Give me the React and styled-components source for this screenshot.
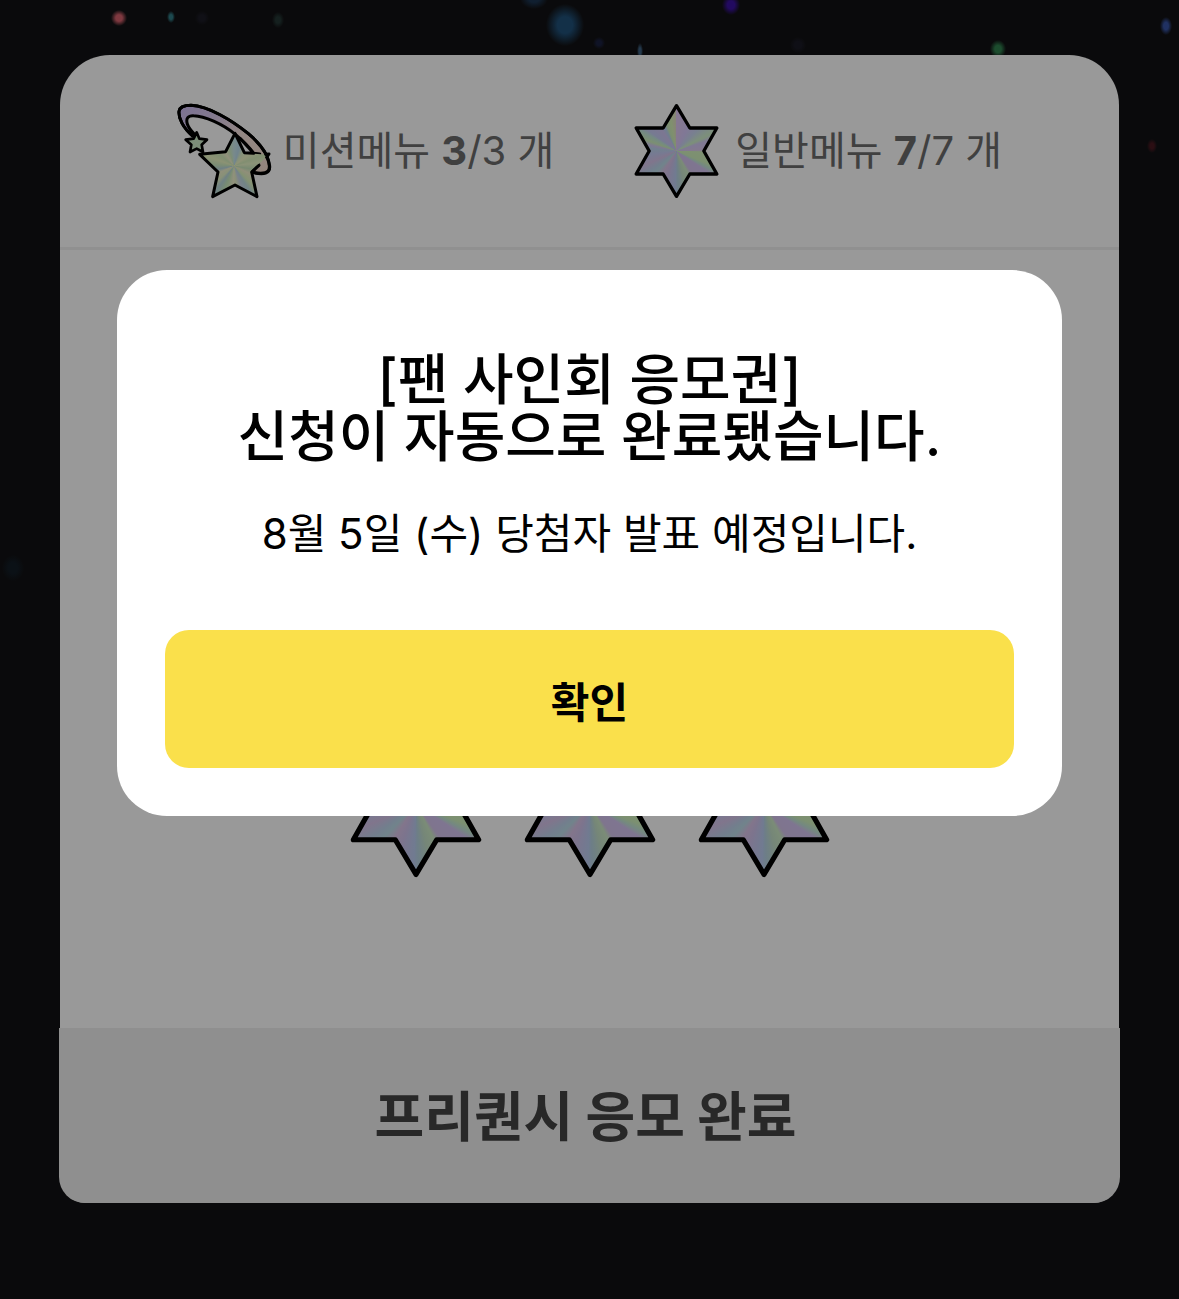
import React from 'react'
import styled, { createGlobalStyle } from 'styled-components'

const GlobalStyle = createGlobalStyle`
  * {
    box-sizing: border-box;
  }

  body {
    margin: 0;
    background: #121215;
    font-family: Inter, "Noto Sans CJK KR", sans-serif;
  }
`

const light = (x, y, rx, ry, color) =>
  `radial-gradient(${rx}px ${ry}px at ${x}px ${y}px, ${color} 0%, ${color} 40%, transparent 100%)`

const lights = [
  light(119, 18, 8, 8, '#d4606c'),
  light(171, 17, 4, 6, '#2f7a84'),
  light(202, 18, 7, 7, '#1b1b26'),
  light(278, 20, 6, 8, '#233634'),
  light(534, -2, 14, 11, '#1b3450'),
  light(565, 25, 19, 21, '#205078'),
  light(599, 43, 6, 6, '#1a2040'),
  light(640, 51, 3, 8, '#3d6080'),
  light(731, 5, 9, 10, '#3a12a0'),
  light(798, 45, 8, 8, '#1a1a26'),
  light(998, 49, 8, 9, '#2f7f4d'),
  light(1166, 26, 6, 9, '#3653a3'),
  light(1152, 146, 5, 7, '#481820'),
  light(13, 568, 11, 13, '#131d26'),
]

const Page = styled.div`
  position: relative;
  min-height: 100vh;
  padding: 55px 60px 96px;
  background: ${lights.join(', ')}, #121215;
`

const Card = styled.main`
  border-radius: 50px 50px 26px 26px;
  background: #fff;
`

const Header = styled.header`
  display: flex;
  align-items: center;
  justify-content: center;
  gap: 80px;
  height: 195px;
  border-bottom: 3px solid #f0f0f0;
`

const Counter = styled.div`
  display: flex;
  align-items: center;
  gap: ${({ $gap }) => $gap}px;
  color: #6c6c6c;
  font-size: 40px;
  line-height: 58px;
  white-space: nowrap;
`

const Stickers = styled.section`
  display: flex;
  align-items: flex-end;
  justify-content: center;
  gap: 42px;
  padding: 481px 0 151px;
`

const Icon = styled.svg`
  display: block;
  flex: none;
  overflow: visible;
  width: ${({ $width }) => $width}px;
  height: ${({ $height }) => $height}px;
`

const Submit = styled.button`
  display: block;
  width: calc(100% + 2px);
  height: 175px;
  margin: 0 -1px;
  padding: 0 8px 4px 0;
  border: 0;
  border-radius: 0 0 26px 26px;
  background: #eee;
  color: #444;
  font-family: "Noto Sans CJK KR", sans-serif;
  font-size: 54px;
  font-weight: 700;
`

const Overlay = styled.div`
  position: absolute;
  inset: 0;
  padding: 270px 117px 0;
  background: rgba(0, 0, 0, 0.4);
`

const Dialog = styled.div`
  padding: 81px 48px 48px;
  border-radius: 50px;
  background: #fff;
  color: #000;
  text-align: center;
`

const Title = styled.h2`
  margin: 0;
  font-size: 55px;
  font-weight: 500;
  line-height: 57px;
`

const Message = styled.p`
  margin: 38px 0 65px;
  font-size: 42px;
  line-height: 62px;
`

const Confirm = styled.button`
  display: block;
  width: 100%;
  height: 138px;
  padding: 0;
  border: 0;
  border-radius: 24px;
  background: #fae04b;
  color: #000;
  font-family: inherit;
  font-size: 42px;
  font-weight: 700;
  cursor: pointer;
`

const Hologram = styled.div`
  width: 100%;
  height: 100%;
  background: conic-gradient(
    from 0deg at 50% 50%,
    #e0c8f2 0deg, #d6c8fa 25deg, #c9d6f0 45deg, #cfecd2 60deg, #cff0ca 64deg,
    #d4caf6 72deg, #dccaee 88deg, #d2f2bc 92deg, #cff0bc 112deg, #c2e4d6 118deg,
    #d4c4f2 124deg, #d4c4ec 145deg, #cdeac6 153deg, #c4e0c8 166deg, #b6d2e2 178deg,
    #bccdf2 182deg, #d0c2ec 200deg, #dac4e8 212deg, #bcdce8 224deg, #c0d2ec 234deg,
    #d6c4ea 246deg, #c6ccf4 262deg, #bed6ee 276deg, #d2caf4 282deg, #cef0be 290deg,
    #c2e6da 300deg, #c6ccf4 306deg, #d0c6f4 325deg, #bad2f0 334deg, #ccecbc 340deg,
    #d6f0b8 350deg, #e0dcc4 359deg, #e0c8f2 360deg
  );
`

const PastelHologram = styled(Hologram)`
  background: conic-gradient(
    from 0deg at 50% 52%,
    #c9e6ea 0deg, #bcdcec 16deg, #dff2ca 32deg, #eff5c6 52deg, #d8eebd 70deg,
    #e8f5c8 82deg, #c9e6bd 100deg, #f0eecb 116deg, #dcf3bf 136deg, #bedce0 148deg,
    #ccd9e8 160deg, #e8f2c8 174deg, #f2f2ce 182deg, #c8eabf 202deg, #bad8dc 216deg,
    #e4f2c8 228deg, #eff0cc 246deg, #b9d7dd 258deg, #cfebc2 274deg, #e9f4c2 290deg,
    #d4edbd 308deg, #f2f2ce 326deg, #d0ecc2 344deg, #c9e6ea 360deg
  );
`

const HEXAGRAM =
  'M125 5 L165 72 L246 72 L207 141 L246 210 L165 210 L125 277 L85 210 L4 210 L43 141 L4 72 L85 72 Z'

const BIG_STAR =
  'M174 86 L202 147 L274 152 L224 204 L240 278 L174 243 L107 278 L123 204 L68 151 L146 143 Z'

const SMALL_STAR =
  'M59 85 L67 104 L90 107 L74 122 L78 144 L59 134 L39 144 L43 122 L26 107 L50 104 Z'

const TAIL_EDGE =
  'M47 96 C18 72 4 42 6 22 C8 7 22 4 42 4 C94 6 165 49 214 89 C240 111 257 131 268 152'

const TAIL_END = 'M270 160 C277 176 280 190 274 200 C266 210 248 209 226 205'

const TAIL =
  'M47 96 C18 72 4 42 6 22 C8 7 22 4 42 4 C94 6 165 49 214 89 C256 124 275 158 278 186 C280 208 262 214 226 205 L222 186 L248 150 L230 148 C216 128 198 110 175 91 C136 59 82 36 50 35 C33 34 26 44 31 60 C35 72 42 80 52 90 Z'

const Star = ({ id, width, height }) => (
  <Icon $width={width} $height={height} viewBox="0 0 250 282" aria-hidden="true">
    <clipPath id={id}>
      <path d={HEXAGRAM} />
    </clipPath>
    <g clipPath={`url(#${id})`}>
      <foreignObject width="250" height="282">
        <Hologram />
      </foreignObject>
    </g>
    <path d={HEXAGRAM} fill="none" stroke="#000" strokeWidth="10" strokeLinejoin="round" />
  </Icon>
)

const ShootingStar = () => (
  <Icon $width={94} $height={94} viewBox="0 0 282 282" aria-hidden="true">
    <linearGradient id="tail" x1="0" y1="0" x2="1" y2="1">
      <stop offset="0" stopColor="#cdbcf4" />
      <stop offset="0.25" stopColor="#d9c9ef" />
      <stop offset="0.55" stopColor="#f5e1db" />
      <stop offset="1" stopColor="#f6dccd" />
    </linearGradient>
    <clipPath id="mission-star">
      <path d={BIG_STAR} />
    </clipPath>
    <path d={TAIL} fill="url(#tail)" stroke="#000" strokeWidth="9" strokeLinejoin="round" />
    <path d="M190 104 L230 148 L208 146 Z" fill="#fff" />
    <g clipPath="url(#mission-star)">
      <foreignObject x="68" y="86" width="206" height="192">
        <PastelHologram />
      </foreignObject>
    </g>
    <g fill="none" stroke="#000" strokeWidth="9" strokeLinejoin="round" strokeLinecap="round">
      <path d={TAIL_EDGE} />
      <path d={TAIL_END} />
      <path d="M190 104 L230 148 L202 146 L174 88 L146 143 L68 151 L123 204 L107 278 L174 243 L240 278 L224 204 L246 184" />
      <path d="M266 151 L276 150 L269 160" />
      <path d={SMALL_STAR} fill="#cdebc8" strokeWidth="8" />
    </g>
    <path d="M250 176 L222 200 L234 202 Z" />
  </Icon>
)

const App = () => {
  const [open, setOpen] = React.useState(true)

  return (
    <>
      <GlobalStyle />
      <Page>
        <Card>
          <Header>
            <Counter $gap={12}>
              <ShootingStar />
              <span>미션메뉴 <b>3</b>/3 개</span>
            </Counter>
            <Counter $gap={16}>
              <Star id="menu-star" width={85} height={94} />
              <span>일반메뉴 <b>7</b>/7 개</span>
            </Counter>
          </Header>
          <Stickers>
            {['first', 'second', 'third'].map((name) => (
              <Star key={name} id={`${name}-star`} width={132} height={146} />
            ))}
          </Stickers>
          <Submit type="button">프리퀀시 응모 완료</Submit>
        </Card>
        {open &&
          <Overlay>
            <Dialog role="dialog" aria-modal="true" aria-labelledby="dialog-title">
              <Title id="dialog-title">
                [팬 사인회 응모권]<br />
                신청이 자동으로 완료됐습니다.
              </Title>
              <Message>8월 5일 (수) 당첨자 발표 예정입니다.</Message>
              <Confirm type="button" onClick={() => setOpen(false)}>확인</Confirm>
            </Dialog>
          </Overlay>
        }
      </Page>
    </>
  )
}

export default App
